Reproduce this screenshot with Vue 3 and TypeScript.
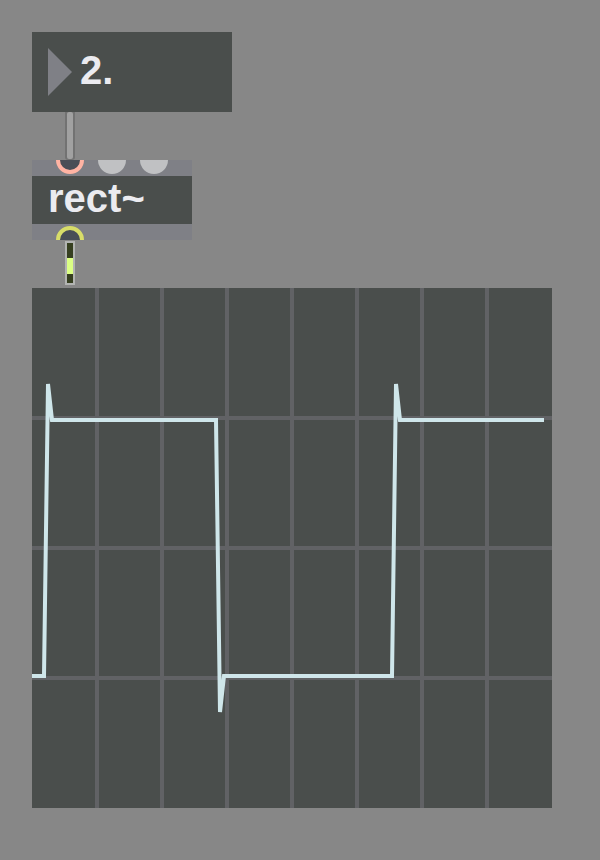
<script setup lang="ts">
import { ref } from 'vue'

type Point = [number, number]

const frequency = ref('2.')

const size = 520
const columns = [65, 130, 195, 260, 325, 390, 455]
const rows = [130, 260, 390]

const samples: Point[] = [
  [0, 388], [12, 388], [16, 96], [20, 132], [184, 132],
  [188, 424], [192, 388], [360, 388], [364, 96], [368, 132], [512, 132],
]
const trace = samples.map((p) => p.join(',')).join(' ')
</script>

<template>
  <main class="patcher">
    <label class="number-box">
      <svg class="arrow" viewBox="0 0 24 48" aria-hidden="true">
        <path d="M0 0L24 24L0 48Z" />
      </svg>
      <input v-model="frequency" class="number" type="text" aria-label="Frequency" />
    </label>

    <svg class="cord" viewBox="0 0 10 48" aria-hidden="true">
      <rect class="cord-edge" x="0" y="-4" width="10" height="52" rx="3" />
      <rect class="cord-core" x="2" y="0" width="6" height="47" rx="2" />
    </svg>

    <section class="object">
      <svg class="ports" viewBox="0 0 160 16" aria-hidden="true">
        <circle class="port hot" cx="38" cy="0" r="12" />
        <circle class="inlet" cx="80" cy="0" r="14" />
        <circle class="inlet" cx="122" cy="0" r="14" />
      </svg>
      <div class="object-name">rect~</div>
      <svg class="ports" viewBox="0 0 160 16" aria-hidden="true">
        <circle class="port signal" cx="38" cy="16" r="12" />
      </svg>
    </section>

    <svg class="cord" viewBox="0 0 10 48" aria-hidden="true">
      <rect class="signal-edge" x="0" y="1" width="10" height="44" />
      <rect class="signal-dark" x="2" y="3" width="6" height="40" />
      <rect class="signal-light" x="2" y="18" width="6" height="16" />
    </svg>

    <svg class="scope" :viewBox="`0 0 ${size} ${size}`" role="img" aria-label="Oscilloscope">
      <g class="grid">
        <line v-for="x in columns" :key="`c${x}`" :x1="x" y1="0" :x2="x" :y2="size" />
        <line v-for="y in rows" :key="`r${y}`" x1="0" :y1="y" :x2="size" :y2="y" />
      </g>
      <polyline class="trace" :points="trace" />
    </svg>
  </main>
</template>

<style>
body {
  margin: 0;
  background: #878787;
}
</style>

<style scoped>
.patcher {
  display: flex;
  flex-direction: column;
  align-items: flex-start;
  box-sizing: border-box;
  min-height: 100vh;
  padding: 32px 48px 52px 32px;
  background: #878787;
  color: #ebebf0;
  font-family: "Liberation Sans", Arial, sans-serif;
  font-size: 40px;
  font-weight: 700;
  line-height: 48px;
}

.number-box {
  display: flex;
  align-items: center;
  gap: 8px;
  box-sizing: border-box;
  width: 200px;
  padding: 16px;
  background: #4a4e4c;
}

.arrow {
  flex: none;
  width: 24px;
  height: 48px;
  fill: #7f8086;
}

.number {
  flex: 1;
  min-width: 0;
  height: 48px;
  box-sizing: border-box;
  padding: 0 0 4px;
  border: 0;
  outline: 0;
  background: transparent;
  color: inherit;
  font: inherit;
}

.cord {
  display: block;
  width: 10px;
  height: 48px;
  margin-left: 33px;
}

.cord-edge {
  fill: #727272;
}

.cord-core {
  fill: #a1a1a1;
}

.object {
  width: 160px;
  background: #4a4e4c;
}

.ports {
  display: block;
  width: 100%;
  height: 16px;
  background: #7f8086;
}

.port {
  fill: #494e56;
  stroke-width: 4px;
}

.hot {
  stroke: #ffb3a3;
}

.signal {
  stroke: #d8dd69;
}

.inlet {
  fill: #c0c1c3;
}

.object-name {
  height: 48px;
  box-sizing: border-box;
  padding: 0 16px;
  line-height: 44px;
}

.signal-edge {
  fill: #b2b4b2;
}

.signal-dark {
  fill: #363f20;
}

.signal-light {
  fill: #dbff84;
}

.scope {
  display: block;
  width: 100%;
  height: auto;
  background: #4a4e4c;
}

.grid {
  stroke: #616265;
  stroke-width: 4px;
}

.trace {
  fill: none;
  stroke: #cfe6ea;
  stroke-width: 4px;
}
</style>
